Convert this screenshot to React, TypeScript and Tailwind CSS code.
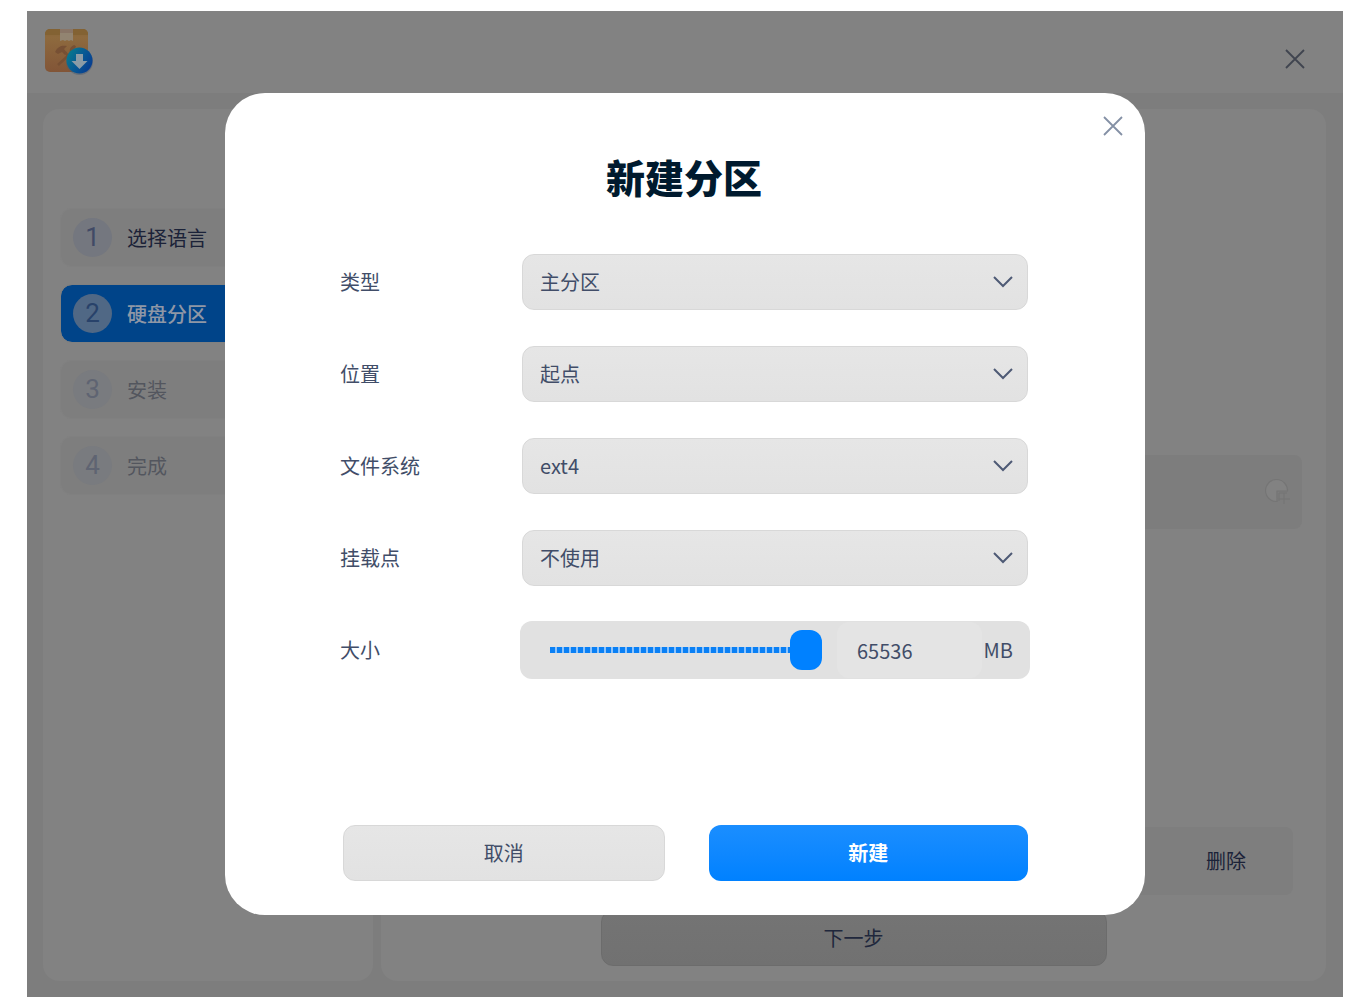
import { useState } from "react";

const steps = [
  { n: 1, label: "选择语言", row: "bg-[#7e7e7e]", circle: "bg-[#74777f] text-[#414a66]", text: "text-[#1b2238]" },
  { n: 2, label: "硬盘分区", row: "bg-[#004489]", circle: "bg-[#506885] text-[#28426a]", text: "text-[#8f97a6] font-medium" },
  { n: 3, label: "安装", row: "bg-[#7e7e7e]", circle: "bg-[#797b7f] text-[#5f6472]", text: "text-[#53565e]" },
  { n: 4, label: "完成", row: "bg-[#7e7e7e]", circle: "bg-[#797b7f] text-[#5f6472]", text: "text-[#53565e]" },
];

const fields = [
  { id: "type", label: "类型", options: ["主分区", "逻辑分区"] },
  { id: "position", label: "位置", options: ["起点", "终点"] },
  { id: "filesystem", label: "文件系统", options: ["ext4", "ext3", "xfs"] },
  { id: "mount", label: "挂载点", options: ["不使用", "/", "/home"] },
];

function CloseIcon() {
  return (
    <svg width="20" height="20" viewBox="0 0 20 20" fill="none" stroke="currentColor" strokeWidth="1.8" aria-hidden="true">
      <path d="M1 1 19 19M19 1 1 19" />
    </svg>
  );
}

function InstallerLogo() {
  return (
    <svg width="50" height="48" viewBox="0 0 50 48" aria-hidden="true">
      <defs>
        <linearGradient id="box" x1="0" y1="0" x2="0" y2="1">
          <stop offset="0" stopColor="#866536" />
          <stop offset="0.2" stopColor="#8e6a3e" />
          <stop offset="1" stopColor="#825537" />
        </linearGradient>
        <linearGradient id="disc" x1="0" y1="0.2" x2="1" y2="0.8">
          <stop offset="0" stopColor="#087b8c" />
          <stop offset="0.5" stopColor="#075994" />
          <stop offset="1" stopColor="#073990" />
        </linearGradient>
      </defs>
      <rect x="0" y="0" width="43" height="43" rx="5" fill="url(#box)" />
      <path d="M0 5a5 5 0 0 1 5-5h33a5 5 0 0 1 5 5v1H0z" fill="#836233" />
      <path d="M15 0h13v12l-2-1-2 1-2-1-2 1-2-1-3 1z" fill="#928471" />
      <path d="M15 0h13v4H15z" fill="#897566" />
      <path d="M10 23c3-6 7-7 12-6l-3 3 3 4-2 2-3-3-4 2z" fill="#775034" />
      <path d="M20 23 31 37M30 17l-4 4v3L13 36" fill="none" stroke="#775034" strokeWidth="2.5" />
      <path d="M25 20q2-5 6-3l-2 3 3 2-4 3z" fill="#775034" />
      <circle cx="34.5" cy="32.5" r="13.5" fill="#4b5c70" opacity="0.5" />
      <circle cx="34.5" cy="31.500" r="13" fill="url(#disc)" />
      <path d="M31 25h7v7h4.500l-8 8-8-8H31z" fill="#8b9ba6" />
    </svg>
  );
}

function PartitionIcon() {
  return (
    <svg width="26" height="26" viewBox="0 0 26 26" fill="none" stroke="#757575" aria-hidden="true">
      <path d="M12 12h10.500A11 11 0 1 0 12 22.500z" fill="#828282" strokeWidth="1.2" />
      <path d="M14 14h8M14 14v8M19 14v11M13.500 20H25" />
    </svg>
  );
}

function Sidebar() {
  return (
    <nav className="w-[330px] rounded-2xl bg-[#828282] pl-[17px] pr-4 pt-[99px]">
      <ol className="flex flex-col gap-[17px]">
        {steps.map((s) => (
          <li key={s.n} className={`flex h-[59px] items-center gap-[15px] rounded-xl border border-[#808080] bg-clip-padding pl-3 ${s.row}`}>
            <span className={`flex size-[39px] items-center justify-center rounded-full font-[Roboto] text-[26px] ${s.circle}`}>{s.n}</span>
            <span className={s.text}>{s.label}</span>
          </li>
        ))}
      </ol>
    </nav>
  );
}

function MainPanel() {
  return (
    <main className="flex flex-1 flex-col rounded-2xl bg-[#828282] pb-[15px] pt-[346px]">
      <div className="mx-6 flex h-[74px] items-center justify-end rounded-lg bg-[#7d7d7d] pr-[11px]">
        <button type="button" aria-label="新建分区">
          <PartitionIcon />
        </button>
      </div>
      <div className="mx-[33px] mt-auto flex justify-end rounded-lg bg-[#7e7e7e]">
        <button type="button" className="h-[68px] w-[134px] text-[#1b2238]">删除</button>
      </div>
      <button type="button" className="mx-auto mt-[15px] h-14 w-[506px] rounded-xl border border-[#6c6c6c] bg-linear-to-b from-[#747474] to-[#717171] text-[#20273c]">
        下一步
      </button>
    </main>
  );
}

function Field({ id, label, options }: { id: string; label: string; options: string[] }) {
  return (
    <div className="flex h-14 items-center">
      <label htmlFor={id} className="w-[182px]">{label}</label>
      <div className="relative h-full flex-1">
        <select id={id} className="size-full appearance-none rounded-xl border border-[#d8d8d8] bg-linear-to-b from-[#e6e6e6] to-[#e2e2e2] pl-[17px] pr-12">
          {options.map((o) => (
            <option key={o}>{o}</option>
          ))}
        </select>
        <svg className="pointer-events-none absolute right-[15px] top-[22px]" width="20" height="12" viewBox="0 0 20 12" fill="none" stroke="#4e5a75" strokeWidth="2" aria-hidden="true">
          <path d="m1 1 9 9 9-9" />
        </svg>
      </div>
    </div>
  );
}

function SizeField() {
  const [size, setSize] = useState("65536");
  return (
    <div className="flex h-14 items-center">
      <label htmlFor="size" className="w-[180px]">大小</label>
      <div className="-mr-0.5 flex h-[58px] flex-1 items-center rounded-xl bg-[#e1e1e1] pl-[30px] pr-[17px]">
        <input
          type="range"
          aria-label="大小"
          min="1"
          max="65536"
          value={size}
          onChange={(e) => setSize(e.target.value)}
          className="h-10 w-[272px] appearance-none bg-transparent [&::-webkit-slider-runnable-track]:h-1.5 [&::-webkit-slider-runnable-track]:bg-[repeating-linear-gradient(90deg,#0a80f5_0_5px,#8fc4fb_5px_7px)] [&::-webkit-slider-thumb]:-mt-[17px] [&::-webkit-slider-thumb]:h-10 [&::-webkit-slider-thumb]:w-8 [&::-webkit-slider-thumb]:appearance-none [&::-webkit-slider-thumb]:rounded-xl [&::-webkit-slider-thumb]:bg-[#0081ff]"
        />
        <input
          id="size"
          type="text"
          value={size}
          onChange={(e) => setSize(e.target.value)}
          className="ml-[15px] h-14 w-[145px] rounded-xl bg-[#e4e4e4] pl-5"
        />
        <span className="ml-auto">MB</span>
      </div>
    </div>
  );
}

function PartitionDialog() {
  return (
    <div className="absolute inset-0 flex items-center justify-center">
      <form
        role="dialog"
        aria-labelledby="dialog-title"
        className="relative w-[920px] max-w-full rounded-[40px] bg-white pb-[34px] pl-[115px] pr-[117px] pt-[53px] text-[#414d68]"
      >
        <button type="button" aria-label="关闭" className="absolute right-[22px] top-[23px] text-[#8490a5]">
          <CloseIcon />
        </button>
        <h1 id="dialog-title" className="text-center text-[39px] font-black leading-[60px] text-[#001a2e]">新建分区</h1>
        <div className="mt-12 flex flex-col gap-9">
          {fields.map((f) => (
            <Field key={f.id} {...f} />
          ))}
          <SizeField />
        </div>
        <div className="mt-[147px] flex gap-11 pl-[3px]">
          <button type="button" className="h-14 flex-1 rounded-xl border border-[#d8d8d8] bg-linear-to-b from-[#e6e6e6] to-[#e2e2e2]">取消</button>
          <button type="button" className="h-14 flex-1 rounded-xl bg-linear-to-b from-[#1a8eff] to-[#0081ff] font-bold text-white">新建</button>
        </div>
      </form>
    </div>
  );
}

export default function App() {
  return (
    <div className="flex min-h-screen bg-white pb-[5px] pl-[27px] pr-[7px] pt-[11px] font-['Noto_Sans_CJK_SC',sans-serif] text-[20px]">
      <div className="relative flex flex-1 flex-col bg-[#7d7d7d]">
        <header className="flex h-[82px] items-start justify-between bg-[#828282] pl-[18px] pr-[38px] pt-[18px]">
          <InstallerLogo />
          <button type="button" aria-label="关闭窗口" className="mt-5 text-[#40444f]">
            <CloseIcon />
          </button>
        </header>
        <div className="flex flex-1 gap-2 p-4 pr-[17px]">
          <Sidebar />
          <MainPanel />
        </div>
        <PartitionDialog />
      </div>
    </div>
  );
}
